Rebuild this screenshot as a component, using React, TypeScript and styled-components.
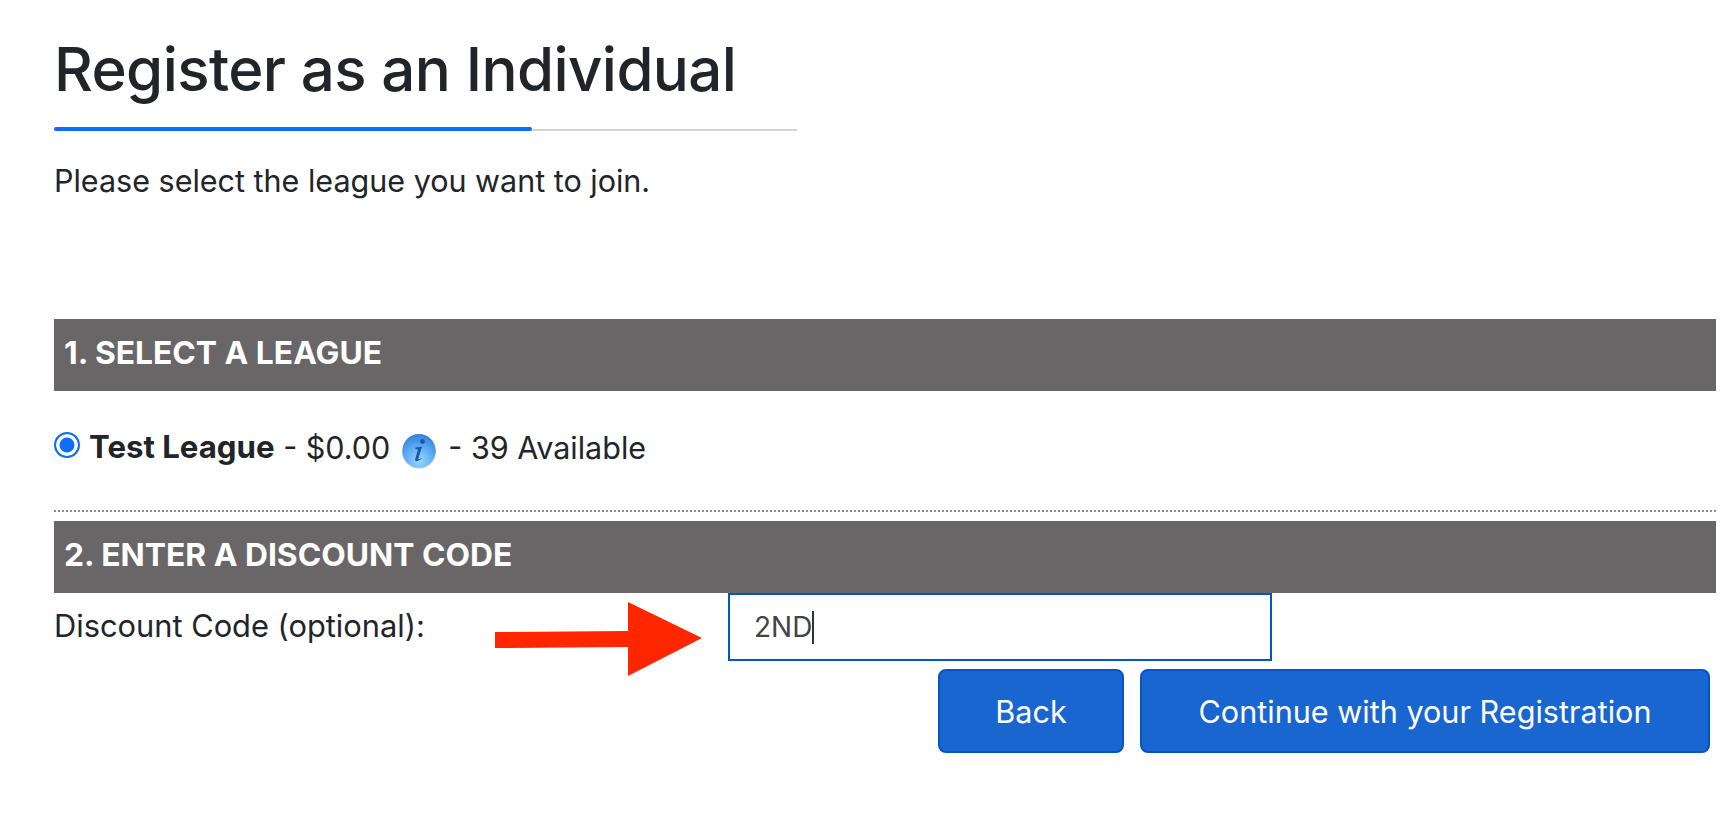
import React from "react";
import styled, { createGlobalStyle } from "styled-components";

const Global = createGlobalStyle`
  html, body { margin: 0; padding: 0; background: #fff; }
  body { font-family: "Inter", "Liberation Sans", sans-serif; color: #212529; }
`;

const Page = styled.main`
  padding: 33px 14px 0 54px;
  width: 1730px;
  height: 814px;
  box-sizing: border-box;
  overflow: hidden;
`;

const Title = styled.h1`
  margin: 0;
  font-size: 60px;
  line-height: 72px;
  font-weight: 500;
  letter-spacing: -0.6px;
  color: #212529;
`;

const Rule = styled.div`
  width: 743px;
  height: 2px;
  margin-top: 24px;
  background: #d3d3d3;
  position: relative;
`;

const RuleAccent = styled.div`
  position: absolute;
  left: 0;
  bottom: 0;
  width: 478px;
  height: 4px;
  background: #0d6efd;
  border-radius: 2px;
`;

const Intro = styled.p`
  margin: 30px 0 0;
  font-size: 30.5px;
  line-height: 40px;
  font-weight: 400;
`;

const SectionHeader = styled.h2<{ $top: number }>`
  margin: ${(p) => p.$top}px 0 0;
  height: 72px;
  padding: 0 10px 6px;
  box-sizing: border-box;
  display: flex;
  align-items: center;
  background: #686667;
  color: #fff;
  font-size: 31.8px;
  font-weight: 700;
  text-transform: uppercase;
`;

const LeagueRow = styled.div`
  display: flex;
  align-items: center;
  height: 72px;
  margin-top: 20px;
  font-size: 30.5px;
  white-space: pre;
`;

const Radio = styled.input`
  appearance: none;
  width: 26px;
  height: 26px;
  margin: 0 9px 4px 0;
  border: 2.5px solid #0d6efd;
  border-radius: 50%;
  background: #0d6efd;
  box-shadow: inset 0 0 0 3.5px #fff;
  box-sizing: border-box;
`;

const LeagueName = styled.strong`
  font-size: 31.2px;
  font-weight: 700;
`;

const InfoIconWrap = styled.svg`
  width: 36px;
  height: 36px;
  margin: 8px 11px 0 11px;
  flex: none;
`;

const Divider = styled.div`
  height: 0;
  margin-top: 27px;
  border-top: 2px dotted #8c8c8c;
`;

const FormRow = styled.div`
  position: relative;
  display: flex;
  height: 68px;
`;

const FieldLabel = styled.label`
  width: 674px;
  flex: none;
  font-size: 30.8px;
  line-height: 66px;
`;

const FakeInput = styled.div`
  width: 544px;
  height: 68px;
  box-sizing: border-box;
  border: 2px solid #0055c7;
  padding: 0 0 0 24px;
  display: flex;
  align-items: center;
  font-size: 28px;
  color: #444;
`;

const Caret = styled.span`
  width: 2px;
  height: 33px;
  background: #333;
`;

const Arrow = styled.svg`
  position: absolute;
  left: 440px;
  top: 8px;
  width: 210px;
  height: 76px;
`;

const Actions = styled.div`
  display: flex;
  justify-content: flex-end;
  gap: 16px;
  margin-top: 8px;
  padding-right: 6px;
`;

const Button = styled.button<{ $width: number }>`
  width: ${(p) => p.$width}px;
  height: 84px;
  box-sizing: border-box;
  border: 2px solid #0055c7;
  border-radius: 8px;
  background: #1a66d1;
  color: #fff;
  font-family: inherit;
  font-size: 30.6px;
  font-weight: 400;
  padding: 0;
`;

function InfoIcon() {
  return (
    <InfoIconWrap viewBox="0 0 36 36" aria-hidden="true">
      <defs>
        <radialGradient id="orb" cx="50%" cy="80%" r="80%">
          <stop offset="0%" stopColor="#9ad8fd" />
          <stop offset="55%" stopColor="#5aaaf2" />
          <stop offset="100%" stopColor="#2f7fdc" />
        </radialGradient>
      </defs>
      <circle cx="18" cy="18.5" r="17" fill="#a9c3d8" />
      <circle cx="18" cy="17.5" r="16.5" fill="url(#orb)" />
      <circle cx="21.5" cy="8.5" r="2.4" fill="#1c58a8" />
      <path
        d="M14.5 14.6 L21 13.6 L17.4 25.5 C17.1 26.8 18.2 26.6 20.4 24.8 L20.8 25.6 C17.6 28.6 13.4 29.6 14.2 26 L17 16.4 L14.3 16 Z"
        fill="#1c58a8"
      />
    </InfoIconWrap>
  );
}

export default function App() {
  return (
    <Page>
      <Global />
      <Title>Register as an Individual</Title>
      <Rule>
        <RuleAccent />
      </Rule>
      <Intro>Please select the league you want to join.</Intro>

      <SectionHeader $top={118}>1. Select a League</SectionHeader>
      <LeagueRow>
        <Radio type="radio" name="league" defaultChecked readOnly />
        <LeagueName>Test League</LeagueName>
        <span> - $0.00</span>
        <InfoIcon />
        <span>- 39 Available</span>
      </LeagueRow>
      <Divider />

      <SectionHeader $top={9}>2. Enter a Discount Code</SectionHeader>
      <FormRow>
        <FieldLabel>Discount Code (optional):</FieldLabel>
        <FakeInput>
          2ND
          <Caret />
        </FakeInput>
        <Arrow viewBox="0 0 210 76" aria-hidden="true">
          <path d="M1 31 L134 30 L134 1 L208 37 L134 75 L134 46 L1 47 Z" fill="#ff2600" />
        </Arrow>
      </FormRow>
      <Actions>
        <Button $width={186}>Back</Button>
        <Button $width={570}>Continue with your Registration</Button>
      </Actions>
    </Page>
  );
}
